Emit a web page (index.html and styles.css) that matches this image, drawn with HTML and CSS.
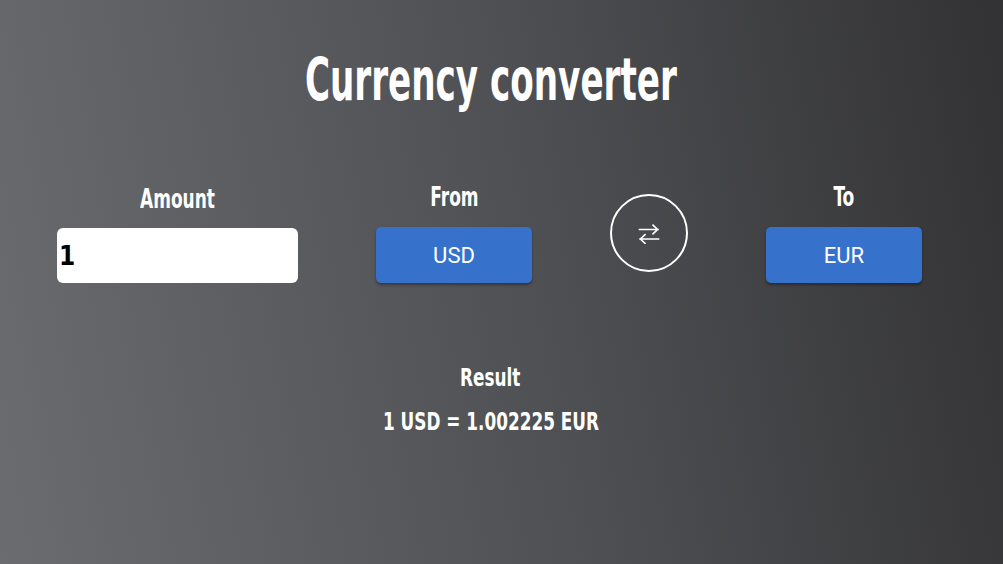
FILE: index.html
```html
<!DOCTYPE html>
<html lang="en">
<head>
<meta charset="utf-8">
<title>Currency converter</title>
<link rel="stylesheet" href="styles.css">
</head>
<body>
<main class="app">
  <h1 class="title"><span class="narrow-t">Currency converter</span></h1>
  <section class="controls">
    <div class="field field-amount">
      <label class="label" for="amount"><span class="narrow">Amount</span></label>
      <input id="amount" class="amount-input" type="text" value="1">
    </div>
    <div class="field">
      <span class="label"><span class="narrow">From</span></span>
      <button class="currency-btn" type="button">USD</button>
    </div>
    <button class="swap-btn" type="button" aria-label="Swap currencies">
      <svg width="22" height="22" viewBox="0 0 22 22" fill="none" stroke="#fff" stroke-width="1.6" stroke-linecap="square">
        <path d="M1.5 7.5H20M15 3.2L19.6 7.5L15 11.8"/>
        <path d="M20.5 17H2M7 12.7L2.4 17L7 21.3"/>
      </svg>
    </button>
    <div class="field">
      <span class="label"><span class="narrow">To</span></span>
      <button class="currency-btn" type="button">EUR</button>
    </div>
  </section>
  <section class="result">
    <h2 class="result-title"><span class="narrow-r">Result</span></h2>
    <p class="result-value"><span class="narrow-r">1 USD = 1.002225 EUR</span></p>
  </section>
</main>
</body>
</html>
```
FILE: styles.css
```css
html, body {
  margin: 0;
  padding: 0;
  height: 100%;
}

body {
  background: linear-gradient(80deg, #6b6c70 0%, #4e4f52 55%, #323234 100%);
  color: #fff;
  font-family: "DejaVu Sans Condensed", "DejaVu Sans", sans-serif;
  overflow: hidden;
}

.app {
  display: flex;
  flex-direction: column;
  align-items: stretch;
  padding-top: 48px;
}

.title {
  margin: 0;
  text-align: center;
  font-size: 58px;
  font-weight: 700;
  line-height: 64px;
  padding-right: 22px;
}

.narrow-t {
  display: inline-block;
  transform: scaleX(0.655);
}

.controls {
  display: flex;
  align-items: flex-start;
  gap: 78px;
  padding-left: 57px;
  margin-top: 70px;
}

.field {
  display: flex;
  flex-direction: column;
  align-items: center;
  gap: 15px;
}

.field-amount {
  padding-top: 2px;
  gap: 14px;
}

.label {
  font-size: 27px;
  font-weight: 700;
  line-height: 30px;
  height: 30px;
}

.narrow {
  display: inline-block;
  transform: scaleX(0.7);
}

.narrow-r {
  display: inline-block;
  transform: scaleX(0.75);
}

.amount-input {
  box-sizing: border-box;
  width: 241px;
  height: 55px;
  border: none;
  border-radius: 6px;
  background: #fff;
  padding: 0 0 0 2px;
  font-family: "DejaVu Sans Condensed", "DejaVu Sans", sans-serif;
  font-weight: 700;
  font-size: 26px;
  color: #000;
  outline: none;
}

.currency-btn {
  width: 156px;
  height: 56px;
  border: none;
  border-radius: 5px;
  background: #3672cb;
  color: #fff;
  font-family: Roboto, "Liberation Sans", sans-serif;
  font-size: 22px;
  box-shadow: 0 2px 3px rgba(0, 0, 0, 0.35);
  cursor: pointer;
}

.swap-btn {
  box-sizing: border-box;
  width: 78px;
  height: 78px;
  border: 2px solid #fff;
  border-radius: 50%;
  background: transparent;
  display: flex;
  align-items: center;
  justify-content: center;
  padding: 0;
  margin-top: 12px;
  cursor: pointer;
}

.swap-btn svg {
  display: block;
}

.result {
  display: flex;
  flex-direction: column;
  align-items: center;
  margin-top: 80px;
  padding-right: 22px;
}

.result-title {
  margin: 0;
  font-size: 25px;
  font-weight: 700;
  line-height: 30px;
}

.result-value {
  margin: 14px 0 0;
  font-size: 25px;
  font-weight: 700;
  line-height: 30px;
}
```
